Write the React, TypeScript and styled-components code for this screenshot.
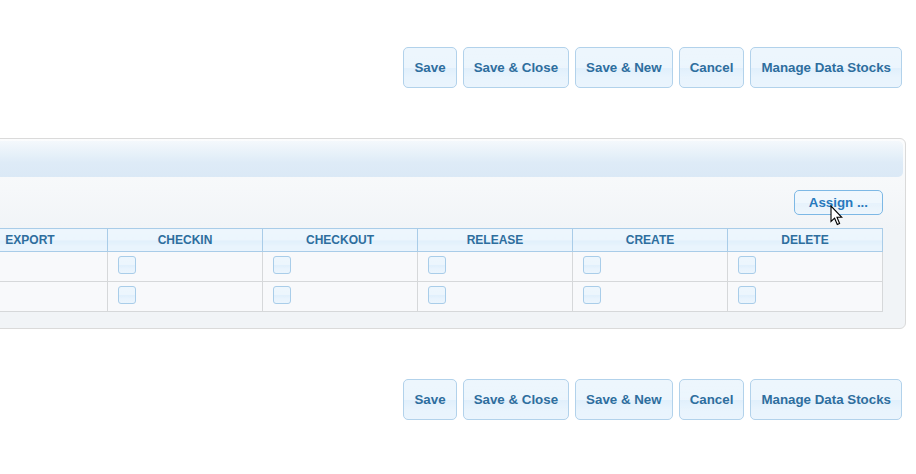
import React from "react";
import styled, { createGlobalStyle } from "styled-components";

const GlobalStyle = createGlobalStyle`
  html, body {
    margin: 0;
    padding: 0;
    background: #ffffff;
    overflow: hidden;
  }
  body {
    font-family: "Liberation Sans", Arial, sans-serif;
  }
`;

const Page = styled.div`
  display: flex;
  flex-direction: column;
  gap: 50px;
  padding-top: 47px;
  width: 916px;
  height: 474px;
  box-sizing: border-box;
`;

const Toolbar = styled.div`
  display: flex;
  justify-content: flex-end;
  gap: 6px;
  padding-right: 14px;
`;

const glass = `
  background-color: #dfeffc;
  background-image: linear-gradient(
    to bottom,
    rgba(255, 255, 255, 0.45) 0%,
    rgba(255, 255, 255, 0.4) 50%,
    rgba(255, 255, 255, 0.05) 52%,
    rgba(255, 255, 255, 0.3) 75%,
    rgba(255, 255, 255, 0.35) 100%
  );
`;

const Button = styled.button`
  height: 41px;
  box-sizing: border-box;
  padding: 0 10px;
  border: 1px solid #b2d2eb;
  border-radius: 5px;
  ${glass}
  color: #2e6e9e;
  font-family: "Liberation Sans", Arial, sans-serif;
  font-weight: bold;
  font-size: 13.33px;
  cursor: pointer;
`;

const PanelRow = styled.div`
  display: flex;
  justify-content: flex-end;
  padding-right: 10px;
`;

const Panel = styled.div`
  flex-shrink: 0;
  border: 1px solid #dadada;
  border-radius: 6px;
  padding: 2px;
  background: linear-gradient(to bottom, #fbfcfd 0px, #f6f8fa 50px, #f1f4f7 90px, #f1f4f7 100%);
`;

const PanelHeader = styled.div`
  height: 36px;
  border-radius: 5px;
  background: linear-gradient(to bottom, #f4f8fc 0%, #e7f1f9 35%, #deebf7 60%, #dbe9f6 100%);
`;

const PanelBody = styled.div`
  padding: 13px 20px 14px 20px;
`;

const AssignRow = styled.div`
  display: flex;
  justify-content: flex-end;
  margin-bottom: 13px;
`;

const AssignWrap = styled.span`
  position: relative;
  display: inline-flex;
`;

const AssignButton = styled.button`
  height: 25px;
  box-sizing: border-box;
  padding: 0 14px;
  border: 1px solid #7db8e5;
  border-radius: 5px;
  background-color: #e2f0fb;
  background-image: linear-gradient(
    to bottom,
    rgba(255, 255, 255, 0.5) 0%,
    rgba(255, 255, 255, 0.45) 50%,
    rgba(255, 255, 255, 0.15) 52%,
    rgba(255, 255, 255, 0.4) 100%
  );
  color: #2779bd;
  font-family: "Liberation Sans", Arial, sans-serif;
  font-weight: bold;
  font-size: 13.33px;
  cursor: pointer;
`;

const Cursor = styled.svg`
  position: absolute;
  left: 36px;
  top: 15px;
  width: 13px;
  height: 21px;
  pointer-events: none;
`;

const Table = styled.table`
  border-collapse: collapse;
  table-layout: fixed;
  font-family: "Liberation Sans", Arial, sans-serif;
`;

const HeadCell = styled.th`
  width: 154px;
  height: 22px;
  padding: 0;
  border: 1px solid #a9cce8;
  ${glass}
  color: #2e6e9e;
  font-size: 12px;
  font-weight: bold;
  text-align: center;
  vertical-align: middle;
`;

const Cell = styled.td`
  height: 30px;
  box-sizing: border-box;
  padding: 4px 10px 0 10px;
  border: 1px solid #d6d8da;
  background: #f8f9fb;
  vertical-align: top;
`;

const Check = styled.span`
  display: block;
  width: 18px;
  height: 18px;
  box-sizing: border-box;
  border: 1px solid #a9cde9;
  border-radius: 3px;
  ${glass}
`;

const columns = ["READ", "WRITE", "EXPORT", "CHECKIN", "CHECKOUT", "RELEASE", "CREATE", "DELETE"];
const rows = [0, 1];
const actions = ["Save", "Save & Close", "Save & New", "Cancel", "Manage Data Stocks"];

function Actions() {
  return (
    <Toolbar>
      {actions.map((a) => (
        <Button key={a}>{a}</Button>
      ))}
    </Toolbar>
  );
}

export default function App() {
  return (
    <>
      <GlobalStyle />
      <Page>
        <Actions />
        <PanelRow>
          <Panel>
            <PanelHeader />
            <PanelBody>
              <AssignRow>
                <AssignWrap>
                  <AssignButton>Assign ...</AssignButton>
                  <Cursor viewBox="0 0 13 21">
                    <path
                      d="M1 1 L1 16.5 L4.6 13.2 L7.3 19.5 L9.6 18.5 L7 12.3 L11.8 12.3 Z"
                      fill="#ffffff"
                      stroke="#000000"
                      strokeWidth="1.1"
                      strokeLinejoin="miter"
                    />
                  </Cursor>
                </AssignWrap>
              </AssignRow>
              <Table>
                <thead>
                  <tr>
                    {columns.map((c) => (
                      <HeadCell key={c}>{c}</HeadCell>
                    ))}
                  </tr>
                </thead>
                <tbody>
                  {rows.map((r) => (
                    <tr key={r}>
                      {columns.map((c) => (
                        <Cell key={c}>
                          <Check />
                        </Cell>
                      ))}
                    </tr>
                  ))}
                </tbody>
              </Table>
            </PanelBody>
          </Panel>
        </PanelRow>
        <Actions />
      </Page>
    </>
  );
}
